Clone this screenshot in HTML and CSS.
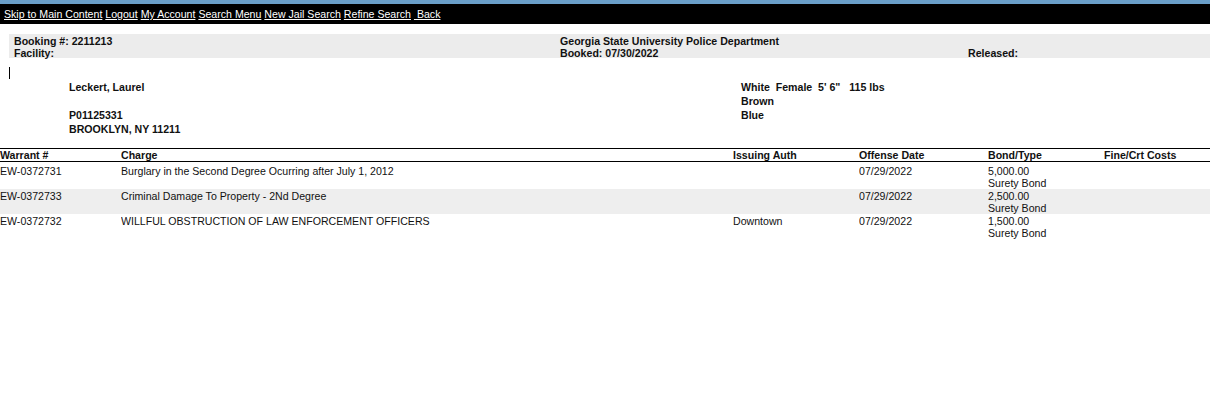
FILE: index.html
```html
<!DOCTYPE html>
<html lang="en">
<head>
<meta charset="utf-8">
<title>Booking Detail</title>
<link rel="stylesheet" href="styles.css">
</head>
<body>
<nav class="topbar">
  <a href="#main">Skip to Main Content</a> <a href="#">Logout</a> <a href="#">My Account</a> <a href="#">Search Menu</a> <a href="#">New Jail Search</a> <a href="#">Refine Search</a> <a href="#">&nbsp;Back</a>
</nav>

<section class="booking">
  <div class="bcol b1">
    <div>Booking #: 2211213</div>
    <div>Facility:</div>
  </div>
  <div class="bcol b2">
    <div>Georgia State University Police Department</div>
    <div>Booked: 07/30/2022</div>
  </div>
  <div class="bcol b3">
    <div>&nbsp;</div>
    <div>Released:</div>
  </div>
</section>

<div class="caret-row"><span class="caret"></span></div>

<section class="person" id="main">
  <div class="pcol">
    <div>Leckert, Laurel</div>
    <div>&nbsp;</div>
    <div>P01125331</div>
    <div>BROOKLYN, NY 11211</div>
  </div>
  <div class="pcol">
    <div>White&nbsp; Female&nbsp; 5' 6"&nbsp;&nbsp; 115 lbs</div>
    <div>Brown</div>
    <div>Blue</div>
  </div>
</section>

<table class="charges">
  <thead>
    <tr>
      <th class="c-war">Warrant #</th>
      <th class="c-chg">Charge</th>
      <th class="c-auth">Issuing Auth</th>
      <th class="c-date">Offense Date</th>
      <th class="c-bond">Bond/Type</th>
      <th class="c-fine">Fine/Crt Costs</th>
    </tr>
  </thead>
  <tbody>
    <tr class="first">
      <td>EW-0372731</td>
      <td>Burglary in the Second Degree Ocurring after July 1, 2012</td>
      <td></td>
      <td>07/29/2022</td>
      <td>5,000.00<br>Surety Bond</td>
      <td></td>
    </tr>
    <tr class="alt">
      <td>EW-0372733</td>
      <td>Criminal Damage To Property - 2Nd Degree</td>
      <td></td>
      <td>07/29/2022</td>
      <td>2,500.00<br>Surety Bond</td>
      <td></td>
    </tr>
    <tr>
      <td>EW-0372732</td>
      <td>WILLFUL OBSTRUCTION OF LAW ENFORCEMENT OFFICERS</td>
      <td>Downtown</td>
      <td>07/29/2022</td>
      <td>1,500.00<br>Surety Bond</td>
      <td></td>
    </tr>
  </tbody>
</table>
</body>
</html>
```

FILE: styles.css
```css
html, body {
  margin: 0;
  padding: 0;
  background: #ffffff;
}

body {
  font-family: "Liberation Sans", Arial, Helvetica, sans-serif;
  font-size: 10.6px;
  line-height: 12px;
  color: #111111;
}

.topbar {
  border-top: 4px solid #6a9fc9;
  background: #000000;
  height: 20px;
  line-height: 20px;
  padding-left: 4px;
  color: #ffffff;
  white-space: nowrap;
}

.topbar a {
  color: #ffffff;
  text-decoration: underline;
}

.booking {
  margin: 10px 0 0 9px;
  height: 24px;
  box-sizing: border-box;
  padding: 1px 0 0 5px;
  background: #ececec;
  display: grid;
  grid-template-columns: 546px 408px 1fr;
  font-weight: bold;
  color: #111111;
}

.caret-row {
  height: 13px;
  padding-top: 9px;
  padding-left: 9px;
}

.caret {
  display: block;
  width: 1px;
  height: 12px;
  background: #000000;
}

.person {
  display: grid;
  grid-template-columns: 672px 1fr;
  padding-left: 69px;
  line-height: 14px;
  font-weight: bold;
  color: #111111;
  margin-bottom: 12px;
}

.charges {
  width: 100%;
  border-collapse: collapse;
  table-layout: fixed;
}

.charges th,
.charges td {
  padding: 1px 0 0 0;
  text-align: left;
  vertical-align: top;
  line-height: 12px;
  white-space: nowrap;
  overflow: hidden;
}

.charges th {
  padding: 0;
  font-weight: bold;
  border-top: 1px solid #000000;
  border-bottom: 1px solid #000000;
}

.charges tr.first td {
  padding-top: 3px;
}

.charges tr.alt td {
  background: #eeeeee;
}

.c-war { width: 121px; }
.c-chg { width: 612px; }
.c-auth { width: 126px; }
.c-date { width: 129px; }
.c-bond { width: 116px; }
.c-fine { width: auto; }
```
